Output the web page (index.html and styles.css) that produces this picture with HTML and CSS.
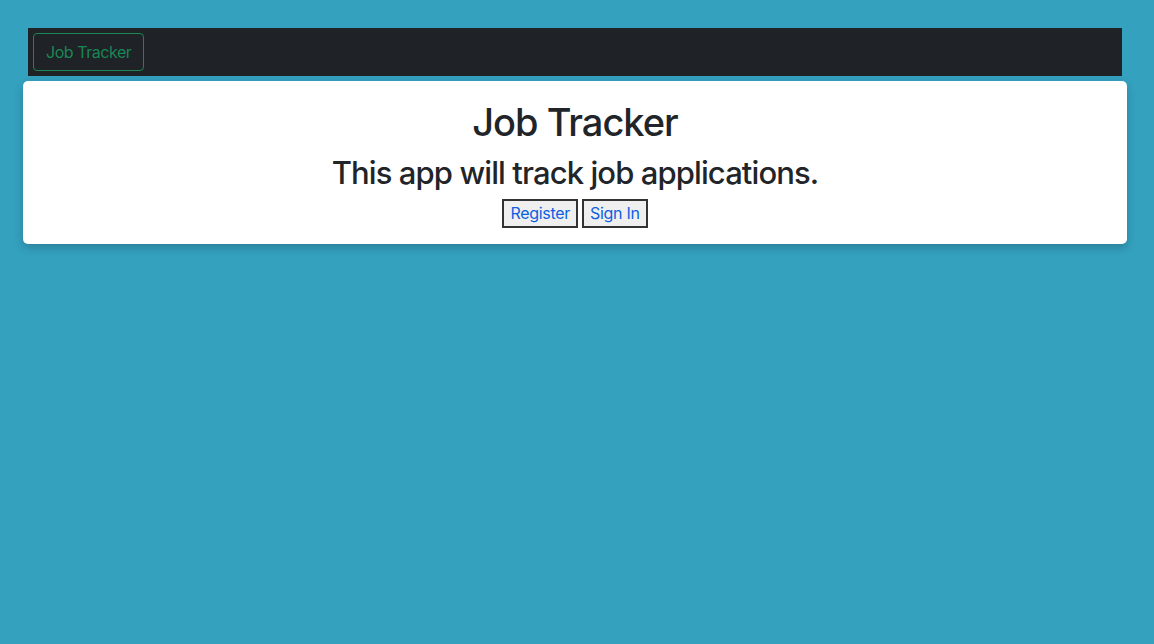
FILE: index.html
```html
<!DOCTYPE html>
<html>
<head>
<meta charset="utf-8">
<link rel="stylesheet" href="styles.css">
</head>
<body>
<div class="page">
  <nav class="navbar">
    <a class="brand">Job Tracker</a>
  </nav>
  <main class="card">
    <h1 class="title">Job Tracker</h1>
    <h2 class="subtitle">This app will track job applications.</h2>
    <div class="actions">
      <button class="btn">Register</button>
      <button class="btn">Sign In</button>
    </div>
  </main>
</div>
</body>
</html>
```

FILE: styles.css
```css
html, body {
  margin: 0;
  padding: 0;
  background: #34a1bf;
  height: 100%;
}
body {
  font-family: Inter, "Liberation Sans", sans-serif;
  color: #212529;
}
.page {
  padding: 28px 27px 28px 23px;
}
.navbar {
  margin: 0 5px;
  background: #1f2227;
  padding: 5px;
  display: flex;
  height: 38px;
}
.brand {
  display: flex;
  align-items: center;
  padding: 0 12px;
  border: 1px solid #198754;
  border-radius: 4px;
  color: #198754;
  font-size: 16px;
  letter-spacing: -0.45px;
}
.card {
  margin-top: 5px;
  background: #fff;
  border-radius: 5px;
  box-shadow: 0 4px 10px rgba(0,0,0,0.2);
  padding: 17px 16px 16px;
  text-align: center;
}
.title {
  margin: 0 0 8px;
  font-size: 38px;
  font-weight: 500;
  line-height: 48px;
  letter-spacing: -1px;
}
.subtitle {
  margin: 0 0 8px;
  font-size: 31px;
  font-weight: 500;
  line-height: 37px;
  letter-spacing: -0.9px;
}
.actions {
  display: flex;
  justify-content: center;
  gap: 4px;
}
.btn {
  font-family: inherit;
  font-size: 16px;
  color: #0d5fe0;
  background: #efefef;
  border: 2px solid #333;
  padding: 0 6px;
  height: 29px;
  line-height: 25px;
  letter-spacing: -0.3px;
  border-radius: 0;
}
```
